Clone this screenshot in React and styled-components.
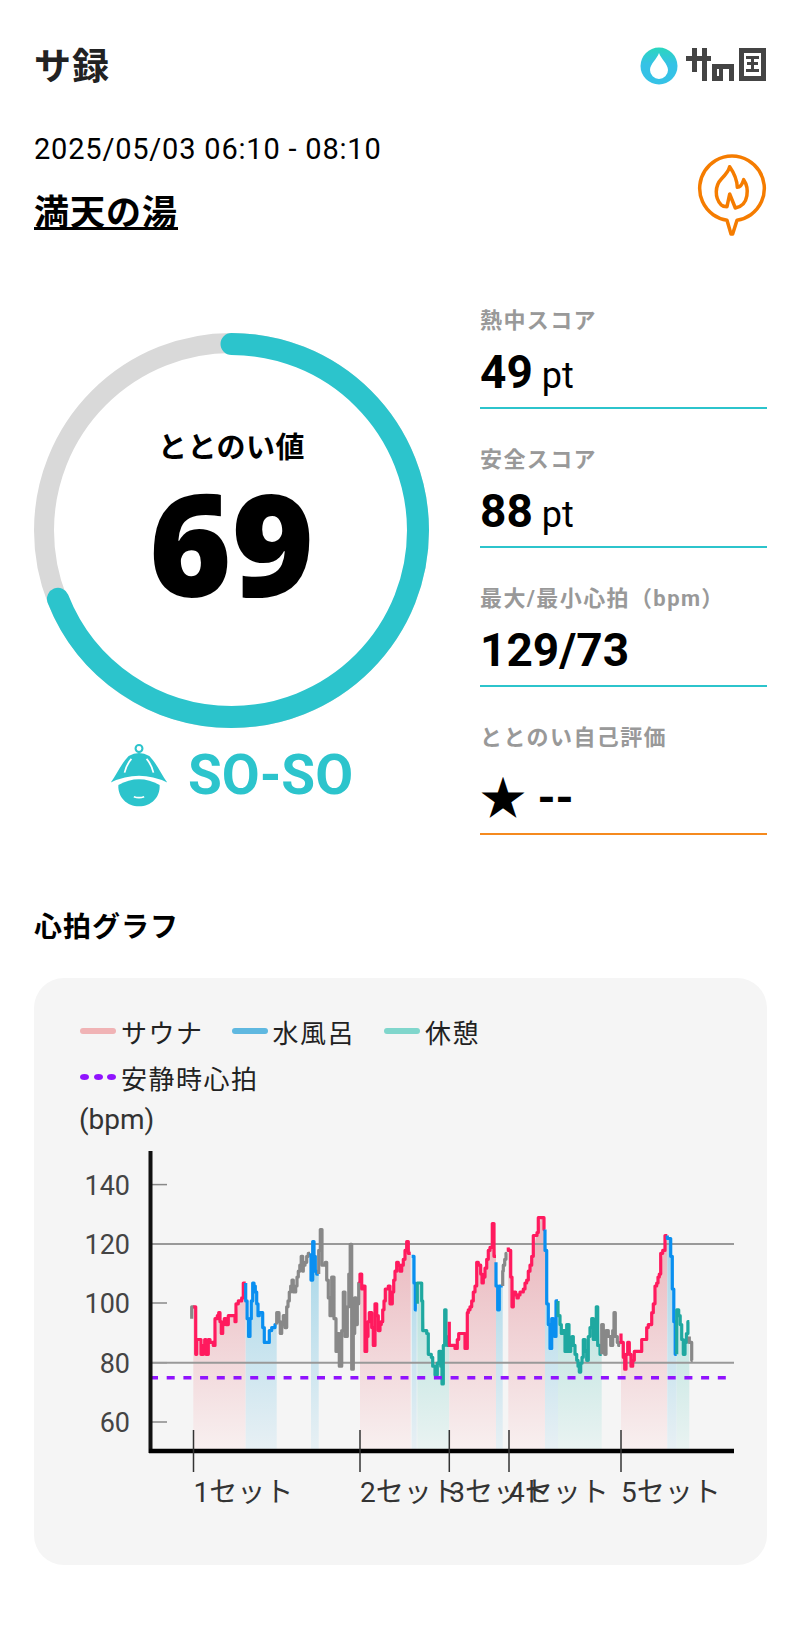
import React from 'react';
import styled, { createGlobalStyle } from 'styled-components';

const TEAL = '#2cc4cc';
const ORANGE = '#f57c00';

const GlobalStyle = createGlobalStyle`
  body {
    margin: 0;
    background: #fff;
    color: #000;
    font-family: Roboto, "Noto Sans CJK JP", sans-serif;
  }
`;

const Page = styled.div`
  width: 800px;
  height: 1627px;
  padding: 44px 33px 0 34px;
  box-sizing: border-box;
  overflow: hidden;
`;

const Header = styled.header`
  display: flex;
  justify-content: space-between;
  align-items: center;
  height: 42px;
`;

const Title = styled.h1`
  margin: 6px 0 0;
  font-size: 37px;
  font-weight: 700;
  line-height: 42px;
  letter-spacing: 1px;
  color: #222;
`;

const Info = styled.section`
  display: flex;
  justify-content: space-between;
  align-items: flex-end;
  margin-top: 20px;
  height: 144px;
  padding-bottom: 16px;
  box-sizing: border-box;
`;

const DateText = styled.div`
  font-size: 29px;
  line-height: 40px;
  letter-spacing: 0.8px;
`;

const Place = styled.a`
  display: inline-block;
  margin-top: 25px;
  font-size: 35px;
  font-weight: 700;
  line-height: 40px;
  letter-spacing: 1px;
  color: #000;
  text-decoration: underline;
`;

const PinWrap = styled.div`
  margin-bottom: -4px;
  line-height: 0;
`;

const Score = styled.section`
  display: grid;
  grid-template-columns: 395px 287px;
  column-gap: 51px;
  margin-top: 55px;
`;

const RingColumn = styled.div`
  padding-top: 28px;
`;

const Ring = styled.div`
  position: relative;
  width: 395px;
  height: 395px;
`;

const RingLabel = styled.div`
  position: absolute;
  inset: 0;
  display: flex;
  flex-direction: column;
  align-items: center;
`;

const RingCaption = styled.div`
  margin-top: 95px;
  font-size: 29px;
  font-weight: 700;
  line-height: 40px;
  letter-spacing: 0.5px;
`;

const RingValue = styled.div`
  margin-top: -6px;
  font-family: "Open Sans", "Noto Sans", sans-serif;
  font-size: 141px;
  font-weight: 800;
  line-height: 160px;
`;

const Status = styled.div`
  display: flex;
  justify-content: center;
  align-items: center;
  gap: 20px;
  margin-top: 12px;
  font-size: 55px;
  font-weight: 700;
  line-height: 70px;
  color: ${TEAL};
`;

const Stats = styled.div`
  display: flex;
  flex-direction: column;
`;

const Stat = styled.div`
  margin-bottom: 35px;
  padding-bottom: 10px;
  border-bottom: 2px solid ${p => p.$accent};

  &:last-child {
    margin-bottom: 0;
  }
`;

const StatLabel = styled.div`
  font-size: 22px;
  font-weight: 700;
  line-height: 32px;
  letter-spacing: 1.4px;
  color: #999;
`;

const StatValue = styled.div`
  margin-top: ${p => p.$tall ? 19 : 10}px;
  font-size: 46px;
  font-weight: 700;
  line-height: 50px;
`;

const StatUnit = styled.span`
  margin-left: 9px;
  font-size: 36px;
  font-weight: 400;
  line-height: 0;
`;

const SectionTitle = styled.h2`
  margin: 74px 0 0;
  font-size: 28px;
  font-weight: 700;
  line-height: 38px;
  letter-spacing: 1px;
`;

const Panel = styled.section`
  margin-top: 31px;
  height: 587px;
  padding-top: 30px;
  box-sizing: border-box;
  border-radius: 30px;
  background: #f5f5f5;
`;

const Legend = styled.div`
  display: flex;
  flex-wrap: wrap;
  width: 520px;
  padding-left: 46px;
`;

const LegendItem = styled.div`
  display: flex;
  align-items: center;
  gap: 5px;
  height: 46px;
  margin-right: ${p => p.$gap}px;
  font-size: 26px;
  letter-spacing: 1.5px;
  color: #222;
`;

const Swatch = styled.span`
  width: 36px;
  height: 6px;
  border-radius: 3px;
  background: ${p => p.$color};
`;

const DotSwatch = styled.span`
  display: flex;
  justify-content: space-between;
  width: 36px;
`;

const Dot = styled.span`
  width: 9px;
  height: 6px;
  border-radius: 50%;
  background: #9013fe;
`;

const UnitLabel = styled.div`
  padding-left: 45px;
  font-size: 28px;
  line-height: 40px;
  color: #333;
`;

const ChartSvg = styled.svg`
  display: block;
`;

const AxisText = styled.text`
  font-family: Roboto, "Noto Sans CJK JP", sans-serif;
  font-size: 27px;
  fill: #444;
`;

const SetText = styled.text`
  font-family: Roboto, "Noto Sans CJK JP", sans-serif;
  font-size: 28px;
  fill: #333;
`;

const Logo = () => (
  <svg width="127" height="40" viewBox="0 0 127 40">
    <defs>
      <linearGradient id="drop" x1="0" y1="0" x2="0" y2="1">
        <stop offset="0" stopColor="#2ad6bd" />
        <stop offset="0.45" stopColor="#35c2e6" />
      </linearGradient>
    </defs>
    <circle cx="19" cy="21" r="18.5" fill="url(#drop)" />
    <path d="M19 8c2 6 9 11 9 17a9 9 0 0 1-18 0c0-6 7-11 9-17z" fill="#fff" />
    <g fill="#444">
      <rect x="46" y="11" width="25" height="5" />
      <rect x="52" y="3" width="5" height="24" />
      <rect x="62" y="3" width="5" height="33" />
      <path d="M72 19h22v17h-5V24h-6v12h-11zM77 24v7h2v-7z" />
      <path d="M99 3h27v33H99zM104 8v23h17V8z" />
      <rect x="106" y="11" width="13" height="3" />
      <rect x="107" y="17" width="11" height="3" />
      <rect x="106" y="24" width="13" height="3" />
      <rect x="111" y="11" width="3" height="16" />
    </g>
  </svg>
);

const MapPin = () => (
  <svg width="70" height="84" viewBox="230 370 210 252">
    <g fill="none" stroke={ORANGE} strokeWidth="10.5" strokeLinejoin="round" strokeLinecap="round">
      <path d="M320 569A97 97 0 1 1 350 569L337 610 332 610z" />
      <path d="M302 522C282 500 284 465 303 445C318 430 325 422 328 408C340 425 350 445 351 470C360 470 366 460 370 447C386 470 388 525 345 532L328 490L320 528C312 528 306 526 302 522z" />
    </g>
  </svg>
);

const HatIcon = () => (
  <svg width="58" height="64" viewBox="66 72 168 186">
    <circle cx="150" cy="88" r="10" fill="none" stroke={TEAL} strokeWidth="6" />
    <path d="M68 187C85 165 95 135 120 110Q150 92 180 110C205 135 215 165 232 187Q150 148 68 187z" fill={TEAL} />
    <path d="M90 194Q150 160 210 194C212 230 185 256 150 256C115 256 88 230 90 194z" fill={TEAL} />
    <path d="M128 118Q114 134 108 158M172 118Q186 134 192 158" fill="none" stroke="#fff" strokeWidth="5" />
    <path d="M135 228Q150 234 165 228" fill="none" stroke="#fff" strokeWidth="5" />
  </svg>
);

const ScoreRing = () => {
  const r = 186.5;
  const len = 2 * Math.PI * r;
  return (
    <svg width="395" height="395" viewBox="0 0 395 395">
      <circle cx="197.5" cy="197.5" r="187.5" fill="none" stroke="#d9d9d9" strokeWidth="20" />
      <circle
        cx="197.5"
        cy="197.5"
        r={r}
        fill="none"
        stroke={TEAL}
        strokeWidth="22"
        strokeLinecap="round"
        strokeDasharray={`${len * 0.69} ${len}`}
        transform="rotate(-90 197.5 197.5)"
      />
    </svg>
  );
};

// points are read off the 3x crops: [x, y] relative to the crop origin
const A = (pts) => pts.map(([x, y]) => [130 + x / 3, 1190 + y / 3]);
const B = (pts) => pts.map(([x, y]) => [420 + x / 3, 1190 + y / 3]);

const COLORS = { sauna: '#ff1a5e', bath: '#0a8ff0', rest: '#1fa8a0', none: '#888' };

const SEGMENTS = [
  ['none', A([[185, 385], [187, 350], [193, 350]])],
  ['sauna', A([[190, 350], [197, 350], [200, 495], [205, 445], [213, 445], [220, 495], [228, 445], [235, 490], [240, 450], [255, 465], [262, 385], [270, 365], [278, 430], [288, 385], [295, 405], [298, 375], [315, 375], [318, 395], [325, 345], [340, 320], [347, 275]])],
  ['bath', A([[347, 275], [360, 440], [372, 275], [380, 305], [388, 380], [398, 365], [408, 455], [418, 455], [425, 425], [440, 400]])],
  ['none', A([[440, 400], [447, 365], [455, 430], [465, 380], [470, 410], [474, 350], [482, 310], [490, 270], [497, 310], [505, 265], [518, 200], [520, 240], [540, 190]])],
  ['bath', A([[543, 190], [548, 270], [552, 150], [560, 240], [566, 250]])],
  ['none', A([[566, 250], [576, 115], [582, 230], [590, 220], [600, 320], [605, 380], [612, 265], [618, 390], [622, 480], [628, 430], [635, 530], [645, 310], [652, 440], [665, 165], [670, 540], [678, 320], [682, 400], [690, 280]])],
  ['sauna', A([[690, 280], [695, 250], [700, 300], [705, 290], [710, 485], [718, 395], [725, 365], [735, 465], [740, 340], [750, 420], [758, 395], [770, 295], [780, 290], [787, 340], [795, 270], [805, 215], [815, 240], [825, 210], [835, 150], [842, 190]])],
  ['bath', A([[845, 195], [852, 195], [860, 360]])],
  ['rest', [...A([[862, 340], [868, 280], [875, 280]]), ...B([[8, 330], [15, 420], [25, 430], [30, 490], [38, 500], [45, 530], [52, 555], [62, 480], [70, 580], [78, 355], [82, 440], [88, 470]])]],
  ['sauna', B([[88, 395], [92, 470], [105, 470], [112, 475], [120, 430], [135, 430], [142, 475], [145, 365], [155, 350], [170, 290], [175, 220], [182, 225], [190, 280], [200, 235], [210, 180], [217, 170], [222, 105], [228, 195]])],
  ['bath', B([[228, 220], [238, 355], [240, 290], [248, 290]])],
  ['none', B([[248, 290], [250, 240], [262, 190]])],
  ['sauna', B([[265, 170], [272, 180], [280, 350], [287, 310], [295, 320], [310, 305], [325, 270], [340, 200], [347, 140], [355, 125], [362, 85], [372, 85], [375, 120]])],
  ['bath', B([[375, 120], [380, 180], [385, 340], [395, 475], [400, 385], [408, 440], [414, 330]])],
  ['rest', B([[414, 330], [420, 380], [428, 430], [435, 420], [440, 480], [447, 400], [452, 480], [460, 440], [470, 490], [482, 545], [490, 500], [495, 450], [505, 510], [510, 440], [520, 385], [525, 450], [533, 350], [540, 470], [545, 490]])],
  ['none', B([[545, 490], [550, 400], [558, 490], [565, 420], [572, 440], [578, 470], [586, 365], [592, 440], [600, 470]])],
  ['sauna', B([[603, 430], [610, 460], [618, 535], [628, 455], [638, 530], [648, 485], [665, 485], [672, 450], [680, 445], [685, 410], [695, 400], [705, 340], [710, 290], [722, 250], [728, 190], [735, 185], [742, 140]])],
  ['bath', B([[742, 140], [752, 145], [757, 200], [770, 490]])],
  ['rest', B([[770, 490], [776, 360], [785, 400], [795, 490], [808, 395]])],
  ['none', B([[808, 440], [815, 460], [818, 515]])],
];

const BASE_Y = 1451;
const BPM_STEP = 2.97;

// the samples sit on whole bpm values, so the line moves in small stairs
const toStairs = (pts) => {
  const out = [];
  const snap = (y) => Math.round(y / BPM_STEP) * BPM_STEP;
  pts.forEach(([x, y], i) => {
    if (i === 0) {
      out.push([x, snap(y)]);
      return;
    }
    const [px, py] = pts[i - 1];
    const steps = Math.max(1, Math.round((x - px) / 1.6));
    for (let s = 1; s <= steps; s++) {
      const nx = px + ((x - px) * s) / steps;
      const ny = snap(py + ((y - py) * s) / steps);
      out.push([out[out.length - 1][0], ny]);
      out.push([nx, ny]);
    }
  });
  return out;
};

const toPoints = (pts) => pts.map(([x, y]) => `${x.toFixed(1)},${y.toFixed(1)}`).join(' ');
const toArea = (pts) => toPoints([[pts[0][0], BASE_Y], ...pts, [pts[pts.length - 1][0], BASE_Y]]);

const Y_LABELS = [[140, 1184.6], [120, 1244], [100, 1303], [80, 1362.7], [60, 1422]];
const SETS = [193.5, 360, 449.3, 509, 621];

const HeartChart = () => (
  <ChartSvg width="732" height="400" viewBox="34 1140 732 400">
    <defs>
      <linearGradient id="fill-sauna" gradientUnits="userSpaceOnUse" x1="0" y1="1240" x2="0" y2="1451">
        <stop offset="0" stopColor="#eab9bf" />
        <stop offset="1" stopColor="#f8f0f0" />
      </linearGradient>
      <linearGradient id="fill-bath" gradientUnits="userSpaceOnUse" x1="0" y1="1240" x2="0" y2="1451">
        <stop offset="0" stopColor="#a5d6e8" />
        <stop offset="1" stopColor="#e8f0f4" />
      </linearGradient>
      <linearGradient id="fill-rest" gradientUnits="userSpaceOnUse" x1="0" y1="1240" x2="0" y2="1451">
        <stop offset="0" stopColor="#a8dcd6" />
        <stop offset="1" stopColor="#eaf3f2" />
      </linearGradient>
    </defs>
    {SEGMENTS.filter(([kind]) => kind !== 'none').map(([kind, pts], i) => (
      <polygon key={i} points={toArea(pts)} fill={`url(#fill-${kind})`} />
    ))}
    {Y_LABELS.map(([label, y]) => (
      <React.Fragment key={label}>
        <line x1="150" x2="167" y1={y} y2={y} stroke="#888" strokeWidth="1.5" />
        <AxisText x="130" y={y + 10} textAnchor="end">{label}</AxisText>
      </React.Fragment>
    ))}
    <line x1="150" x2="734" y1="1244" y2="1244" stroke="#999" strokeWidth="2" />
    <line x1="150" x2="734" y1="1362.7" y2="1362.7" stroke="#999" strokeWidth="2" />
    {SEGMENTS.map(([kind, pts], i) => (
      <polyline key={i} points={toPoints(toStairs(pts))} fill="none" stroke={COLORS[kind]} strokeWidth="3.2" strokeLinejoin="round" />
    ))}
    <line x1="150" x2="726" y1="1377.7" y2="1377.7" stroke="#9013fe" strokeWidth="3.5" strokeDasharray="8 8.7" />
    <line x1="150.5" x2="150.5" y1="1151" y2="1453" stroke="#111" strokeWidth="4" />
    <line x1="149" x2="734" y1="1451" y2="1451" stroke="#000" strokeWidth="4.5" />
    {SETS.map((x, i) => (
      <React.Fragment key={x}>
        <line x1={x} x2={x} y1="1430" y2="1472" stroke="#333" strokeWidth="1.5" />
        <SetText x={x} y="1502">{i + 1}セット</SetText>
      </React.Fragment>
    ))}
  </ChartSvg>
);

const STATS = [
  { label: '熱中スコア', value: '49', unit: 'pt', accent: TEAL },
  { label: '安全スコア', value: '88', unit: 'pt', accent: TEAL },
  { label: '最大/最小心拍（bpm）', value: '129/73', accent: TEAL },
  { label: 'ととのい自己評価', value: '★ --', accent: '#f58a1f', tall: true },
];

const App = () => (
  <Page>
    <GlobalStyle />
    <Header>
      <Title>サ録</Title>
      <Logo />
    </Header>
    <Info>
      <div>
        <DateText>2025/05/03 06:10 - 08:10</DateText>
        <Place>満天の湯</Place>
      </div>
      <PinWrap><MapPin /></PinWrap>
    </Info>
    <Score>
      <RingColumn>
        <Ring>
          <ScoreRing />
          <RingLabel>
            <RingCaption>ととのい値</RingCaption>
            <RingValue>69</RingValue>
          </RingLabel>
        </Ring>
        <Status>
          <HatIcon />
          <span>SO-SO</span>
        </Status>
      </RingColumn>
      <Stats>
        {STATS.map(stat => (
          <Stat key={stat.label} $accent={stat.accent}>
            <StatLabel>{stat.label}</StatLabel>
            <StatValue $tall={stat.tall}>
              {stat.value}
              {stat.unit && <StatUnit>{stat.unit}</StatUnit>}
            </StatValue>
          </Stat>
        ))}
      </Stats>
    </Score>
    <SectionTitle>心拍グラフ</SectionTitle>
    <Panel>
      <Legend>
        <LegendItem $gap={28}><Swatch $color="#f0b3b5" />サウナ</LegendItem>
        <LegendItem $gap={29}><Swatch $color="#5fb8e0" />水風呂</LegendItem>
        <LegendItem $gap={0}><Swatch $color="#80d6cc" />休憩</LegendItem>
        <LegendItem $gap={0}><DotSwatch><Dot /><Dot /><Dot /></DotSwatch>安静時心拍</LegendItem>
      </Legend>
      <UnitLabel>(bpm)</UnitLabel>
      <HeartChart />
    </Panel>
  </Page>
);

export default App;
